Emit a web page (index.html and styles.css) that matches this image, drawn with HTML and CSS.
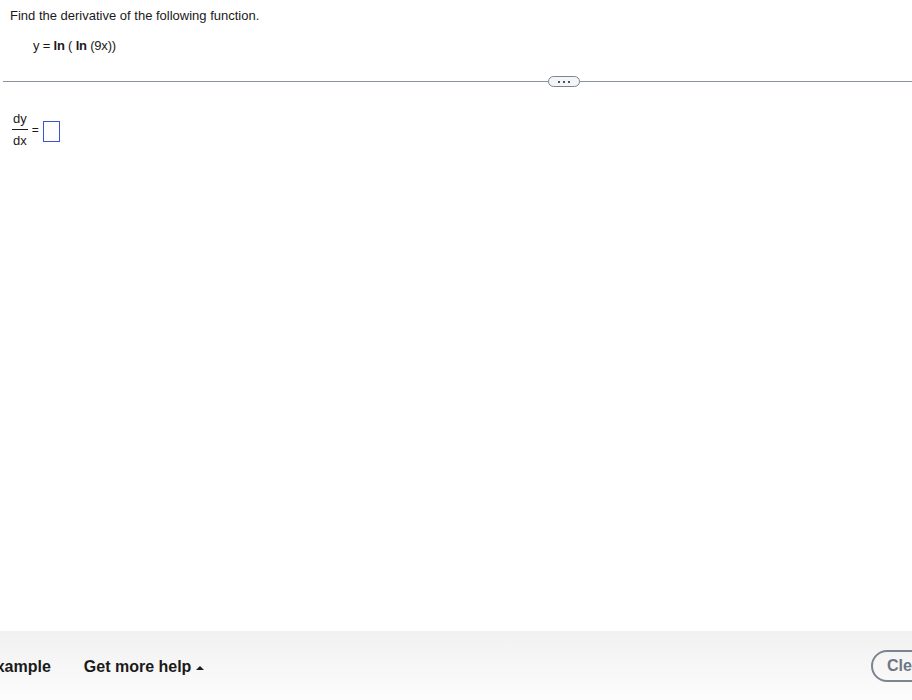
FILE: index.html
```html
<!DOCTYPE html>
<html>
<head>
<meta charset="utf-8">
<link rel="stylesheet" href="styles.css">
</head>
<body>
<div class="page">
  <div class="question">
    <p class="prompt">Find the derivative of the following function.</p>
    <p class="func">y = <b>ln</b> ( <b>ln</b> (9x))</p>
  </div>
  <div class="divider">
    <span class="pill"><i></i><i></i><i></i></span>
  </div>
  <div class="answer">
    <span class="frac"><span class="num">dy</span><span class="den">dx</span></span>
    <span class="eq">=</span>
    <span class="box"></span>
  </div>
</div>
<footer class="footer">
  <span class="link example">View an example</span>
  <span class="link help">Get more help <span class="tri"></span></span>
  <span class="clear">Clear all</span>
</footer>
</body>
</html>
```
FILE: styles.css
```css
html, body { margin: 0; padding: 0; }
body {
  width: 912px;
  height: 700px;
  overflow: hidden;
  font-family: "Liberation Sans", Arial, sans-serif;
  color: #1a1a1a;
  background: #fff;
  position: relative;
}
.page { height: 631px; }
.question { padding: 8px 0 0 10px; }
.prompt { margin: 0; font-size: 13px; line-height: 16px; }
.func { margin: 14px 0 0 23px; font-size: 13px; line-height: 16px; letter-spacing: -0.2px; }
.func b { font-weight: bold; }
.divider {
  margin: 27px 0 0 3px;
  height: 1px;
  background: #8b939d;
  position: relative;
}
.pill {
  position: absolute;
  left: 545px;
  top: -5px;
  width: 30px;
  height: 9px;
  border: 1px solid #7c8591;
  border-radius: 6px;
  background: #f4f5f7;
  display: flex;
  align-items: center;
  justify-content: center;
  gap: 3px;
}
.pill i { width: 2px; height: 2px; background: #4a5563; display: block; }
.answer {
  display: flex;
  align-items: center;
  margin: 29px 0 0 12px;
}
.frac {
  display: flex;
  flex-direction: column;
  align-items: center;
  font-size: 13px;
  line-height: 15px;
}
.num { border-bottom: 1px solid #1a1a1a; padding: 0 1px 3px; }
.den { padding-top: 3px; }
.eq { font-size: 12px; margin: 0 4px 0 4px; position: relative; top: 0px; }
.box {
  width: 15px;
  height: 19px;
  border: 1.5px solid #3656d4;
  position: relative;
  top: 2px;
}
.footer {
  position: absolute;
  left: 0; right: 0; bottom: 0;
  height: 69px;
  background: linear-gradient(#f1f1f1, #fcfcfc);
  display: flex;
  align-items: center;
  font-size: 16px;
  font-weight: bold;
  color: #1a1a1a;
}
.link { white-space: nowrap; position: relative; top: 1px; }
.example { margin-left: -77px; }
.help { margin-left: 33px; display: flex; align-items: center; }
.tri {
  display: inline-block;
  width: 0; height: 0;
  border-left: 4px solid transparent;
  border-right: 4px solid transparent;
  border-bottom: 4px solid #1a1a1a;
  margin-left: 5px;
  margin-top: 3px;
}
.clear {
  position: absolute;
  left: 871px;
  top: 19px;
  height: 28px;
  padding: 0 14px;
  line-height: 28px;
  border: 2px solid #7c8391;
  border-radius: 16px;
  color: #6f7683;
  white-space: nowrap;
  background: transparent;
}
```
